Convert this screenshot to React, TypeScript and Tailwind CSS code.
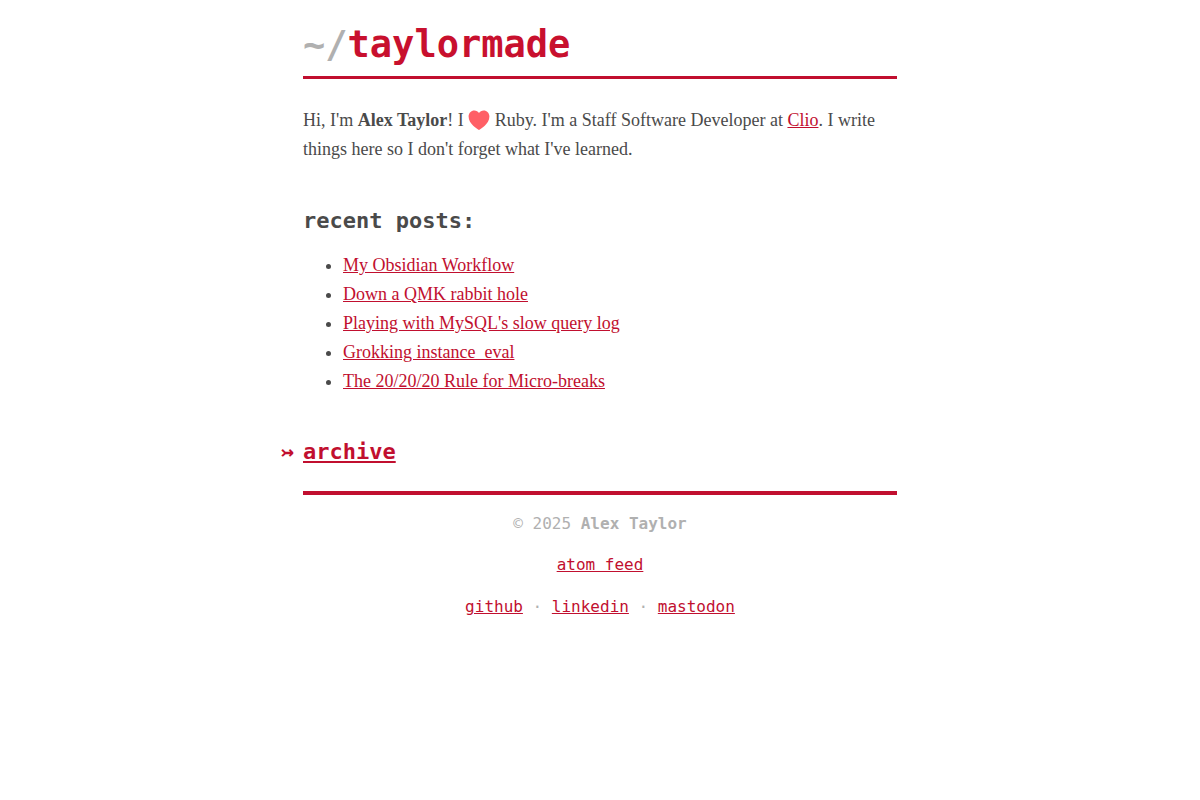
const posts = [
  { title: "My Obsidian Workflow", href: "#obsidian-workflow" },
  { title: "Down a QMK rabbit hole", href: "#qmk" },
  { title: "Playing with MySQL's slow query log", href: "#slow-query-log" },
  { title: "Grokking instance_eval", href: "#instance-eval" },
  { title: "The 20/20/20 Rule for Micro-breaks", href: "#micro-breaks" },
];

const Heart = () => (
  <svg
    viewBox="0 0 22 22"
    className="inline-block w-[22px] h-[22px] align-[-5px]"
    role="img"
    aria-label="love"
  >
    <path
      d="M11 21C9.500 19.800.6 15 .6 7.400.6 4 3.200 1.400 6.300 1.400c2 0 3.800.9 4.700 2.500.9-1.600 2.700-2.500 4.700-2.500 3.100 0 5.700 2.600 5.700 6C21.400 15 12.500 19.800 11 21z"
      fill="#ff5f66"
    />
  </svg>
);

const Header = () => (
  <header className="border-b-3 border-[#c10f2f] pt-4 pb-[2px]">
    <h1 className="font-['DejaVu_Sans_Mono',monospace] text-[37px] leading-[58px] font-bold">
      <span className="text-[#b0b0b0]">~/</span>
      <a href="#home" className="text-[#c8102e]">
        taylormade
      </a>
    </h1>
  </header>
);

const Footer = () => (
  <footer className="border-t-4 border-[#c10f2f] pt-4 text-center font-['DejaVu_Sans_Mono',monospace] text-base leading-[26px] text-[#b0b0b0]">
    <p>
      © 2025 <strong>Alex Taylor</strong>
    </p>
    <p className="mt-[15px]">
      <a href="#atom" className="text-[#c10f2f] underline">
        atom feed
      </a>
    </p>
    <p className="mt-4">
      <a href="#github" className="text-[#c10f2f] underline">
        github
      </a>{" "}
      ·{" "}
      <a href="#linkedin" className="text-[#c10f2f] underline">
        linkedin
      </a>{" "}
      ·{" "}
      <a href="#mastodon" className="text-[#c10f2f] underline">
        mastodon
      </a>
    </p>
  </footer>
);

const App = () => {
  return (
    <div className="mx-auto max-w-[594px] font-['Liberation_Serif',serif] text-[18px] leading-[29px] text-[#4a4a4a]">
      <Header />
      <main>
        <p className="mt-[27px]">
          Hi, I'm <strong>Alex Taylor</strong>! I <Heart /> Ruby. I'm a Staff
          Software Developer at{" "}
          <a href="#clio" className="text-[#c10f2f] underline">
            Clio
          </a>
          . I write things here so I don't forget what I've learned.
        </p>
        <h2 className="mt-10 font-['DejaVu_Sans_Mono',monospace] text-[22px] leading-[33px] font-bold">
          recent posts:
        </h2>
        <ul className="mt-[14px] list-disc pl-10">
          {posts.map((post) => (
            <li key={post.href}>
              <a href={post.href} className="text-[#c10f2f] underline">
                {post.title}
              </a>
            </li>
          ))}
        </ul>
        <h2 className="relative mt-[39px] mb-[23px] font-['DejaVu_Sans_Mono',monospace] text-[22px] leading-[33px] font-bold text-[#c10f2f]">
          <span className="absolute right-full mr-[9px]" aria-hidden="true">
            ↣
          </span>
          <a href="#archive" className="underline">
            archive
          </a>
        </h2>
      </main>
      <Footer />
    </div>
  );
};

export default App;
